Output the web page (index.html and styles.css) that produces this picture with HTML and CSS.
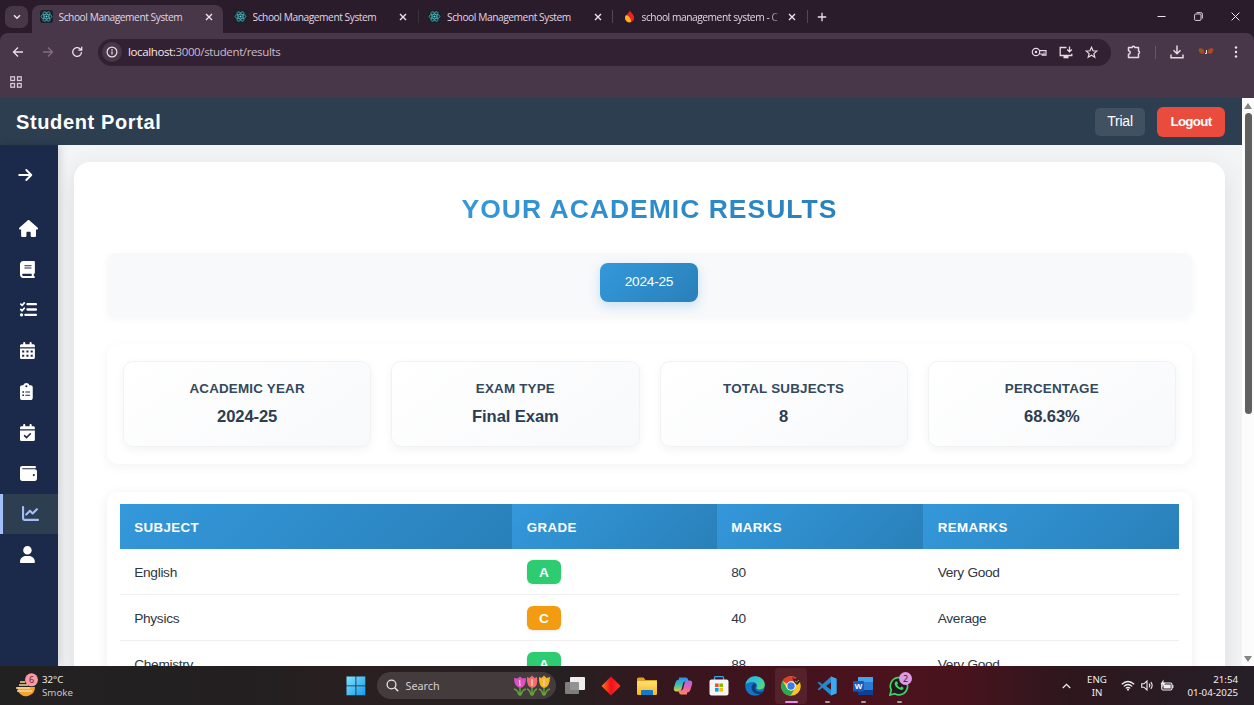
FILE: index.html
```html
<!DOCTYPE html>
<html lang="en">
<head>
<meta charset="utf-8">
<title>School Management System</title>
<link rel="stylesheet" href="styles.css">
</head>
<body>
<svg class="defs" width="0" height="0">
  <defs>
    <symbol id="react" viewBox="0 0 14 14"><rect width="14" height="14" rx="3" fill="#1b2029"/><g fill="none" stroke="#4fb9c4" stroke-width=".8"><ellipse cx="7" cy="7" rx="5.8" ry="2.3"/><ellipse cx="7" cy="7" rx="5.8" ry="2.3" transform="rotate(60 7 7)"/><ellipse cx="7" cy="7" rx="5.8" ry="2.3" transform="rotate(120 7 7)"/></g><circle cx="7" cy="7" r="1.1" fill="#6fdce4"/></symbol>
    <symbol id="close" viewBox="0 0 8 8"><path d="M1 1l6 6M7 1L1 7" stroke="#eee3ec" stroke-width="1.4" fill="none"/></symbol>
    <linearGradient id="winblue" x1="0" y1="0" x2="1" y2="1"><stop offset="0" stop-color="#7fe3ff"/><stop offset="1" stop-color="#159bea"/></linearGradient>
    <linearGradient id="yellow" x1="0" y1="0" x2="0" y2="1"><stop offset="0" stop-color="#ffe07a"/><stop offset="1" stop-color="#f6b71d"/></linearGradient>
    <linearGradient id="edge" x1="0" y1="0" x2="1" y2="1"><stop offset="0" stop-color="#29b0e8"/><stop offset=".5" stop-color="#35c8c0"/><stop offset="1" stop-color="#66dd55"/></linearGradient>
    <linearGradient id="diamond" x1="0" y1="0" x2="1" y2="0"><stop offset="0" stop-color="#ff7a1a"/><stop offset=".5" stop-color="#f0101c"/><stop offset="1" stop-color="#ff3a2a"/></linearGradient>
    <linearGradient id="copA" x1="0" y1="0" x2="0" y2="1"><stop offset="0" stop-color="#2b8cf0"/><stop offset=".5" stop-color="#35c1b0"/><stop offset="1" stop-color="#e6c83a"/></linearGradient>
    <linearGradient id="copB" x1="0" y1="0" x2="0" y2="1"><stop offset="0" stop-color="#a06af0"/><stop offset=".5" stop-color="#e862b0"/><stop offset="1" stop-color="#ff8a5a"/></linearGradient>
  </defs>
</svg>

<header class="tabstrip">
  <div class="tabsearch"><svg width="8" height="6" viewBox="0 0 8 6"><path d="M1 1.2l3 3 3-3" fill="none" stroke="#eee3ec" stroke-width="1.5"/></svg></div>
  <div class="tab active"><svg class="fav"><use href="#react"/></svg><span>School Management System</span><svg class="x"><use href="#close"/></svg></div>
  <div class="tab"><svg class="fav"><use href="#react"/></svg><span>School Management System</span><svg class="x"><use href="#close"/></svg></div>
  <div class="tab"><svg class="fav"><use href="#react"/></svg><span>School Management System</span><svg class="x"><use href="#close"/></svg></div>
  <div class="tab"><svg class="fav" viewBox="0 0 14 14"><path d="M7.500 .5c1 2.500 4.500 4.500 4.500 8a4.900 4.900 0 0 1-9.800 0C2.200 6 5 5 7.500.5z" fill="#e8261c"/><path d="M3.200 5.500c3 1 5.500 3 5.300 7.500A4.800 4.800 0 0 1 2.200 8.500c0-1 .4-2 1-3z" fill="#ffb52b"/></svg><span class="fade">school management system - C</span><svg class="x"><use href="#close"/></svg></div>
  <svg class="plus" width="10" height="10" viewBox="0 0 10 10"><path d="M5 .8v8.400M.8 5h8.400" stroke="#eee3ec" stroke-width="1.300"/></svg>
  <div class="winctl">
    <svg width="9" height="9" viewBox="0 0 9 9"><path d="M.5 4.500h8" stroke="#eee3ec"/></svg>
    <svg width="9" height="9" viewBox="0 0 9 9"><g fill="none" stroke="#eee3ec" stroke-width=".9"><rect x=".6" y="2" width="6.400" height="6.400" rx="1"/><path d="M2.500.6h4.300q1.600 0 1.600 1.600v4.300"/></g></svg>
    <svg width="9" height="9" viewBox="0 0 9 9"><path d="M.6.6l7.800 7.800M8.400.6L.6 8.400" stroke="#eee3ec"/></svg>
  </div>
</header>

<div class="toolbar">
  <svg class="nav" viewBox="0 0 12 12"><path d="M11 6H1.500M6 1.500L1.500 6 6 10.500" /></svg>
  <svg class="nav dim" viewBox="0 0 12 12"><path d="M1 6h9.500M6 1.500L10.500 6 6 10.500"/></svg>
  <svg class="nav" viewBox="0 0 12 12"><path d="M10.500 6A4.400 4.400 0 1 1 9 2.700L10.500 4M10.700.8v3.400H7.300"/></svg>
  <div class="omnibox">
    <div class="info"><svg width="12" height="12" viewBox="0 0 12 12"><circle cx="6" cy="6" r="4.900" fill="none" stroke="#eadfe8" stroke-width="1.200"/><path d="M6 5.300v3.300M6 3.100v1.300" stroke="#eadfe8" stroke-width="1.200"/></svg></div>
    <span class="url"><b>localhost:</b>3000/student/results</span>
    <div class="omni-icons">
      <svg width="16" height="10" viewBox="0 0 16 10"><g fill="none" stroke="#e6d9e4" stroke-width="1.200"><circle cx="5" cy="5" r="3.700"/><path d="M8.500 3.600h6.500v4.600h-3.800V7H8.500M13 5.500v2.500"/></g><circle cx="5" cy="5" r="1.300" fill="#e6d9e4"/></svg>
      <svg width="14" height="13" viewBox="0 0 14 13"><path d="M7.500 1.500H1.200v8h11.600V7.800M10.500.5v5M8.200 3.500l2.300 2.300 2.300-2.300" fill="none" stroke="#e6d9e4" stroke-width="1.300"/><path d="M4.500 10h5v2.300h-5z" fill="#e6d9e4"/></svg>
      <svg width="13" height="13" viewBox="0 0 13 13"><path d="M6.500 1.300l1.500 3.500 3.800.3-2.900 2.500.9 3.700-3.300-2-3.300 2 .9-3.700L1.200 5.100 5 4.800z" fill="none" stroke="#e6d9e4" stroke-width="1.200"/></svg>
    </div>
  </div>
  <svg class="ext" width="14" height="14" viewBox="0 0 14 14"><path d="M1.500 2.500h3.700a1.300 1.300 0 0 1 2.600 0h3.700V6a1.400 1.400 0 0 1 0 2.700v3.800h-10V9.300c2.300-.4 2.300-3.200 0-3.600z" fill="none" stroke="#e6d9e4" stroke-width="1.500" stroke-linejoin="round"/></svg>
  <i class="sep"></i>
  <svg class="dl" width="14" height="14" viewBox="0 0 14 14"><path d="M7 .5v8M3.500 5.300L7 8.800l3.500-3.500M1 9.500v3.300h12V9.500" fill="none" stroke="#e6d9e4" stroke-width="1.500"/></svg>
  <svg class="avatar" width="16" height="8" viewBox="0 0 16 8"><path d="M.5 1q2.500-1.500 5 .5l.8 3.500-2 .8Q1 5.500.5 1zM15.500 1q-2.500-1.500-5 .5l-.8 3.500 2 .8q3.300-.3 3.800-4.800z" fill="#c0441a"/><path d="M2 2l2.500 2M14 2l-2.500 2" stroke="#3a7a35"/><path d="M8.500 2v3.500H7" stroke="#f1e6e0" fill="none"/></svg>
  <svg width="4" height="14" viewBox="0 0 4 14" fill="#eee3ec"><circle cx="2" cy="2.500" r="1.200"/><circle cx="2" cy="7" r="1.200"/><circle cx="2" cy="11.500" r="1.200"/></svg>
</div>
<div class="bookmarks"><svg width="12" height="12" viewBox="0 0 12 12" fill="none" stroke="#d8c8d5" stroke-width="1.300"><rect x=".8" y=".8" width="3.700" height="3.700"/><rect x="7.500" y=".8" width="3.700" height="3.700"/><rect x=".8" y="7.500" width="3.700" height="3.700"/><rect x="7.500" y="7.500" width="3.700" height="3.700"/></svg></div>

<div class="viewport">
  <div class="app">
    <div class="topbar"><h1>Student Portal</h1><span class="trial">Trial</span><span class="logout">Logout</span></div>
    <div class="body">
      <nav class="side">
        <div class="toggle"><svg width="15" height="14" viewBox="0 0 15 14"><path d="M1.200 7h12M8.300 2l5 5-5 5" fill="none" stroke="#fff" stroke-width="1.900" stroke-linecap="round" stroke-linejoin="round"/></svg></div>
        <a class="item"><svg viewBox="0 0 576 512"><path d="M575.8 255.500c0 18-15 32.100-32 32.100h-32l.7 160.200V472c0 22.100-17.900 40-40 40H392c-22.100 0-40-17.900-40-40v-88c0-17.700-14.300-32-32-32h-64c-17.700 0-32 14.300-32 32v88c0 22.100-17.900 40-40 40h-80c-22.100 0-40-17.900-40-40V287.600H32c-18 0-32-14-32-32.100 0-9 3-17 10-24L266.400 8c7-7 15-8 22-8s15 2 21 7l255.400 224.500c8 7 12 15 11 24z"/></svg></a>
        <a class="item"><svg viewBox="0 0 448 512"><path d="M96 0C43 0 0 43 0 96V416c0 53 43 96 96 96H384h32c17.700 0 32-14.300 32-32s-14.300-32-32-32V384c17.700 0 32-14.300 32-32V32c0-17.700-14.300-32-32-32H384 96zm0 384H352v64H96c-17.700 0-32-14.300-32-32s14.300-32 32-32zm32-240c0-8.800 7.200-16 16-16H336c8.800 0 16 7.200 16 16s-7.200 16-16 16H144c-8.800 0-16-7.200-16-16zm16 48H336c8.800 0 16 7.200 16 16s-7.200 16-16 16H144c-8.800 0-16-7.200-16-16s7.200-16 16-16z"/></svg></a>
        <a class="item"><svg viewBox="0 0 512 512"><g fill="none" stroke="#fff" stroke-linecap="round" stroke-linejoin="round"><path d="M224 96h256M224 256h256M160 416h320" stroke-width="68"/><path d="M24 96l40 38 64-76M24 256l40 38 64-76" stroke-width="52"/></g><circle cx="48" cy="416" r="50"/></svg></a>
        <a class="item"><svg viewBox="0 0 448 512"><path d="M128 0c17.700 0 32 14.300 32 32V64H288V32c0-17.700 14.300-32 32-32s32 14.300 32 32V64h48c26.500 0 48 21.500 48 48v48H0V112C0 85.500 21.500 64 48 64H96V32c0-17.700 14.300-32 32-32zM0 192H448V464c0 26.500-21.500 48-48 48H48c-26.500 0-48-21.500-48-48z"/><path class="cut" d="M64 256h64v60H64zM192 256h64v60h-64zM320 256h64v60h-64zM64 384h64v60H64zM192 384h64v60h-64zM320 384h64v60h-64z"/></svg></a>
        <a class="item"><svg viewBox="0 0 384 512"><path d="M192 0c-41.800 0-77.400 26.700-90.500 64H64C28.700 64 0 92.700 0 128v320c0 35.300 28.700 64 64 64h256c35.300 0 64-28.700 64-64V128c0-35.300-28.700-64-64-64h-37.500C269.400 26.700 233.800 0 192 0z"/><path class="cut" d="M192 64a32 32 0 1 1 0 64 32 32 0 1 1 0-64zM72 248h48v48H72zM160 256h144v32H160zM72 344h48v48H72zM160 352h144v32H160z"/></svg></a>
        <a class="item"><svg viewBox="0 0 448 512"><path d="M128 0c17.700 0 32 14.300 32 32V64H288V32c0-17.700 14.300-32 32-32s32 14.300 32 32V64h48c26.500 0 48 21.500 48 48v48H0V112C0 85.500 21.500 64 48 64H96V32c0-17.700 14.300-32 32-32zM0 192H448V464c0 26.500-21.500 48-48 48H48c-26.500 0-48-21.500-48-48z"/><path d="M136 352l60 58 116-116" fill="none" stroke="#1b2a4a" stroke-width="48" stroke-linecap="round"/></svg></a>
        <a class="item"><svg viewBox="0 0 512 512"><path fill-rule="evenodd" d="M64 32C28.700 32 0 60.700 0 96V416c0 35.300 28.700 64 64 64H448c35.300 0 64-28.700 64-64V192c0-35.300-28.700-64-64-64H80c-8.800 0-16-7.200-16-16s7.200-16 16-16H448c17.700 0 32-14.300 32-32s-14.300-32-32-32H64zM416 272a32 32 0 1 1 0 64 32 32 0 1 1 0-64z"/></svg></a>
        <a class="item on"><svg viewBox="0 0 512 512"><path d="M64 64c0-17.700-14.300-32-32-32S0 46.300 0 64V400c0 44.200 35.800 80 80 80H480c17.700 0 32-14.300 32-32s-14.300-32-32-32H80c-8.800 0-16-7.200-16-16V64zm406.600 86.600c12.500-12.500 12.500-32.800 0-45.300s-32.800-12.500-45.300 0L320 210.700l-57.400-57.400c-12.500-12.500-32.800-12.500-45.300 0l-112 112c-12.500 12.500-12.500 32.800 0 45.300s32.800 12.500 45.300 0L240 221.300l57.400 57.400c12.500 12.500 32.800 12.500 45.300 0l128-128z"/></svg></a>
        <a class="item"><svg viewBox="0 0 448 512"><path d="M224 256A128 128 0 1 0 224 0a128 128 0 1 0 0 256zm-45.700 48C79.800 304 0 383.800 0 482.300C0 498.700 13.300 512 29.700 512H418.300c16.400 0 29.700-13.300 29.700-29.700C448 383.800 368.200 304 269.700 304H178.300z"/></svg></a>
      </nav>
      <main class="main">
        <section class="sheet">
          <h2><span>YOUR ACADEMIC RESULTS</span></h2>
          <div class="years"><span class="year">2024-25</span></div>
          <div class="stats">
            <div class="stat"><h3>ACADEMIC YEAR</h3><p>2024-25</p></div>
            <div class="stat"><h3>EXAM TYPE</h3><p>Final Exam</p></div>
            <div class="stat"><h3>TOTAL SUBJECTS</h3><p>8</p></div>
            <div class="stat"><h3>PERCENTAGE</h3><p>68.63%</p></div>
          </div>
          <div class="results">
            <div class="row head"><span>SUBJECT</span><span>GRADE</span><span>MARKS</span><span>REMARKS</span></div>
            <div class="row"><span>English</span><span><b class="grade">A</b></span><span>80</span><span>Very Good</span></div>
            <div class="row"><span>Physics</span><span><b class="grade c">C</b></span><span>40</span><span>Average</span></div>
            <div class="row"><span>Chemistry</span><span><b class="grade">A</b></span><span>88</span><span>Very Good</span></div>
          </div>
        </section>
      </main>
    </div>
  </div>
  <div class="scroll"><i class="up"></i><i class="thumb"></i><i class="down"></i></div>
</div>

<footer class="taskbar">
  <div class="weather">
    <svg width="24" height="26" viewBox="0 0 24 26"><path d="M2 14h18a9 9 0 0 1-16.500 5z" fill="#f5a32c"/><path d="M5 9h5M4 12h9M1 15h14M2 18h15" stroke="#f7d79a" stroke-width="1.500"/><circle cx="16.500" cy="6.800" r="6.500" fill="#f79aa8"/><text x="16.500" y="10.300" text-anchor="middle" class="badge6">6</text></svg>
    <div><p>32°C</p><p class="soft">Smoke</p></div>
  </div>
  <svg class="start" width="20" height="20" viewBox="0 0 20 20" fill="url(#winblue)"><path d="M.5.5h9v9h-9zM10.300.5h9v9h-9zM.5 10.300h9v9h-9zM10.300 10.300h9v9h-9z"/></svg>
  <div class="search">
    <svg width="13" height="13" viewBox="0 0 13 13"><circle cx="5.500" cy="5.500" r="4.400" fill="none" stroke="#e8e4e5" stroke-width="1.300"/><path d="M8.700 8.700l3.500 3.500" stroke="#e8e4e5" stroke-width="1.500"/></svg>
    <span>Search</span>
    <svg class="tulips" width="40" height="22" viewBox="0 0 40 22"><path d="M8 9v12M7 20q-1-5-5-6M9 20q1-5 5-6M20 9v12M19 20q-1-5-4-6M21 20q1-5 4-6M32 9v12M31 20q-1-5-4-6M33 20q1-5 5-6" stroke="#5fa03a" stroke-width="1.500" fill="none"/><path d="M2 3l3.500.5L8 1.500l2.500 2L14 3q0 9-5.500 10Q2 12 2 3z" fill="#df4fc0"/><path d="M15 2l2.500 1L20 .5 22.500 3 25 2q1.500 10-4.500 11Q14 12 15 2z" fill="#ef6e72"/><path d="M27 2l2.500 1L32 .5 34.500 3l3.500-1q0 10-6 11-5.500-1-5-11z" fill="#f5b62e"/><path d="M7.500 5l.5 6M20 4v7M32 4v7" stroke="#ffd0bd" stroke-width="1.300"/></svg>
  </div>
  <div class="apps">
    <div><svg viewBox="0 0 20 20"><rect x="5" y="1" width="15" height="13" rx="1" fill="#eee"/><rect x="0" y="6" width="14" height="12" rx="1" fill="#888" opacity=".9"/></svg></div>
    <div><svg viewBox="0 0 20 20"><path d="M10 .5l9.500 9.500-9.500 9.500L.5 10z" fill="url(#diamond)"/></svg></div>
    <div><svg viewBox="0 0 20 20"><path d="M0 3q0-1.500 1.500-1.500h5L8.500 4H20v5H0z" fill="#e3a21b"/><rect y="5" width="20" height="14" rx="1.200" fill="url(#yellow)"/><path d="M4 19v-4q0-1 1-1h10q1 0 1 1v4z" fill="#1678c8"/></svg></div>
    <div><svg viewBox="0 0 20 20"><path d="M6 1.500h7q1.500 0 2 2l.6 2H12q-1.500 0-2 2l-1.500 6q-.7 2-2.500 2H3.500q-3.500 0-2.500-4l1.500-5q1-3 3.500-3z" fill="url(#copA)"/><path d="M14 18.500H8q-1.500 0-2-2l-.5-2H8q1.500 0 2.200-2l1.500-6q.6-2 2.300-2h2.500q3.500 0 2.500 4l-1.500 5q-1 3-3.500 3z" fill="url(#copB)"/></svg></div>
    <div><svg viewBox="0 0 20 20"><path d="M5.500 5V1.700q0-1 1-1h7q1 0 1 1V5" fill="none" stroke="#38a4e6" stroke-width="1.300"/><rect x=".5" y="3.500" width="19" height="16" rx="2" fill="#f4f4f4"/><path d="M6 7.500h3.600v3.600H6z" fill="#f25022"/><path d="M10.400 7.500H14v3.600h-3.600z" fill="#7fba00"/><path d="M6 12h3.600v3.600H6z" fill="#00a4ef"/><path d="M10.400 12H14v3.600h-3.600z" fill="#ffb900"/></svg></div>
    <div><svg viewBox="0 0 20 20"><circle cx="10" cy="10" r="9.800" fill="#1574c4"/><path d="M.4 8.500C1.500 3.300 5.500.2 10 .2c6 0 9.800 4.300 9.800 8.300 0 3-2.300 5-5.500 5-2.300 0-3-1-2.500-2 1.500-3-1-5.500-4-5.500C4.500 6 1.500 7 .4 8.500z" fill="url(#edge)"/><path d="M7.500 8.500c-2.500 4 .5 10 7 9.800 2-.4 3.500-2 4.200-3.300-3 1.500-7.200 1-8.200-1.500C9.700 11.800 11 10 11 9 10.500 7.500 8.500 7 7.500 8.500z" fill="#103f78"/></svg></div>
    <div class="current"><svg viewBox="0 0 20 20"><circle cx="10" cy="10" r="9.800" fill="#f7c52b"/><path d="M10 10L1.500 5.100A9.800 9.800 0 0 1 18.500 5.200H10z" fill="#e33b2e"/><path d="M1.500 5.100A9.800 9.800 0 0 0 9.500 19.800L14 12.300 6 12.500z" fill="#2da94f"/><circle cx="10" cy="10" r="4.700" fill="#fff"/><circle cx="10" cy="10" r="3.700" fill="#3c7be8"/><path d="M11 1l2.500 2L16 2l2 1 2-2-1 5-3 3-3-3z" fill="#3b2523"/><path d="M14 5l1.500 1L18 4" stroke="#c58b6b" fill="none"/></svg><i class="run pink"></i></div>
    <div><svg viewBox="0 0 20 20"><path d="M14 .5L5.500 8.300 2 5.700.5 6.500 4 10 .5 13.500l1.500.8 3.500-2.600L14 19.500l5.500-2.300V2.800zM14.500 6v8L9 10z" fill="#2489ca" fill-rule="evenodd"/><path d="M14 .5l5.500 2.300v14.400L14 19.500z" fill="#3fa9f0"/></svg><i class="run"></i></div>
    <div><svg viewBox="0 0 20 20"><rect x="5" y="1" width="15" height="18" rx="1.300" fill="#2b7cd3"/><path d="M5 1h15v5H5z" fill="#41a5ee"/><path d="M5 14h15v5H5z" fill="#103f91"/><rect y="5" width="11" height="10.500" rx="1" fill="#185abd"/><text x="5.500" y="13.300" text-anchor="middle" class="wordw">W</text></svg><i class="run"></i></div>
    <div><svg viewBox="0 0 20 20"><path d="M1 19l1.300-4.800A8.600 8.600 0 1 1 5.700 17.700z" fill="#21191c" stroke="#3dd366" stroke-width="1.700"/><path d="M6.500 5.500l1.500-.3 1 2.300-.8 1.200q1 2 3 3l1.200-1.100 2.200 1.100-.3 1.600q-2 1.500-5-.5T5.700 8.500q-.2-1.800.8-3z" fill="#3dd366"/></svg><i class="run"></i><b class="count">2</b></div>
  </div>
  <svg class="chev" width="9" height="6" viewBox="0 0 9 6"><path d="M.8 5l3.700-3.700L8.200 5" fill="none" stroke="#eee" stroke-width="1.300"/></svg>
  <div class="lang">ENG<br>IN</div>
  <div class="tray">
    <svg width="14" height="11" viewBox="0 0 14 11"><g fill="none" stroke="#eee" stroke-width="1.200"><path d="M.8 4.300q6.200-5.600 12.400 0M2.800 6.400q4.200-3.800 8.400 0M4.700 8.400q2.300-2 4.600 0"/></g><circle cx="7" cy="9.600" r="1.100" fill="#eee"/></svg>
    <svg width="13" height="11" viewBox="0 0 13 11"><path d="M.7 3.800h2.200L6 1v9L2.900 7.200H.7zM8 3.700q1.500 1.800 0 3.600M9.800 2.200q2.700 3.300 0 6.600" fill="none" stroke="#eee" stroke-width="1.100"/></svg>
    <svg width="14" height="13" viewBox="0 0 14 13"><rect x="1.700" y="4" width="10.300" height="7" rx="1.500" fill="none" stroke="#eee" stroke-width="1.100"/><rect x="3.500" y="5.500" width="7.200" height="4" fill="#eee"/><path d="M12.800 6v3" stroke="#eee" stroke-width="1.200"/><path d="M3.500.5L.5 5.300h2L2 8.500 5.500 4h-2z" fill="#eee"/></svg>
  </div>
  <div class="clock">21:54<br>01-04-2025</div>
</footer>
</body>
</html>
```
FILE: styles.css
```css
* { box-sizing: border-box; }
html, body { margin: 0; height: 705px; overflow: hidden; }
body { width: 1254px; display: flex; flex-direction: column; background: #2a1c2b; font-family: "Liberation Sans", Arial, sans-serif; }
h1, h2, h3, p { margin: 0; }
svg { display: block; flex: none; }
.defs { position: absolute; }

/* Browser frame */
.tabstrip { height: 33px; flex: none; display: flex; align-items: center; background: #2a1c2b; font: 10.2px/16px "Open Sans", sans-serif; letter-spacing: -.43px; color: #e2d6e0; }
.tabsearch { width: 23px; height: 22px; margin: 0 4px 0 5px; border-radius: 7px; background: #483748; display: grid; place-items: center; }
.tab { width: 194.5px; height: 33px; padding: 0 10.5px; display: flex; align-items: center; position: relative; }
.tab.active { width: 191px; height: 28px; margin-top: 5px; padding: 0 10px 5px 7.500px; border-radius: 8px 8px 0 0; background: #483748; }
.tab span { margin-left: 6px; flex: 1; white-space: nowrap; overflow: hidden; }
.tab.active + .tab::after, .tab + .tab + .tab::after { content: ""; position: absolute; right: -1px; top: 10px; width: 1px; height: 13px; background: #574656; }
.tab.active + .tab::after { background: #3d2e3d; }
.tab .fade { -webkit-mask-image: linear-gradient(90deg, #000 92%, transparent 102%); mask-image: linear-gradient(90deg, #000 92%, transparent 102%); margin-right: 8px; }
.fav { width: 13px; height: 13px; }
.x { width: 8px; height: 8px; }
.plus { margin-left: 10px; }
.winctl { margin-left: auto; margin-right: 14.500px; display: flex; gap: 28px; }
.toolbar { height: 38px; flex: none; display: flex; align-items: center; padding-left: 12px; background: #483748; border-radius: 8px 8px 0 0; }
.nav { width: 12px; height: 12px; margin-right: 17.500px; fill: none; stroke: #eadfe8; stroke-width: 1.300; }
.nav.dim { stroke: #826f80; }
.omnibox { width: 1013px; height: 27px; margin-left: -2.500px; padding: 0 13px 0 4px; display: flex; align-items: center; border-radius: 14px; background: #322132; }
.info { width: 20px; height: 20px; border-radius: 50%; background: #483748; display: grid; place-items: center; }
.url { margin-left: 6px; font: 11.500px/16px "Open Sans", sans-serif; letter-spacing: -.37px; color: #cbbcc9; }
.url b { font-weight: 400; color: #f3eaf1; }
.omni-icons { margin-left: auto; display: flex; align-items: center; gap: 12px; }
.ext { margin-left: 15.500px; }
.sep { width: 1px; height: 13px; margin: 0 14px; background: #6a5668; }
.avatar { margin: 0 20px 0 14px; }
.bookmarks { height: 27px; flex: none; padding: 5px 10px; background: #483748; }

/* Application */
.viewport { height: 568px; flex: none; display: flex; overflow: hidden; }
.app { width: 1242px; display: flex; flex-direction: column; }
.topbar { height: 47px; flex: none; padding: 0 17px 0 16px; display: flex; align-items: center; background: #2c3e50; color: #fff; }
.topbar h1 { font-size: 20px; line-height: 24px; letter-spacing: .62px; }
.trial { margin-left: auto; width: 50px; height: 28px; border-radius: 5px; background: #415162; font-size: 14px; letter-spacing: -.2px; line-height: 27px; text-align: center; }
.logout { margin-left: 12px; width: 68px; height: 30px; border-radius: 6px; background: #e94b3c; font-size: 13.300px; letter-spacing: -.65px; font-weight: 700; line-height: 29px; text-align: center; }
.body { height: 521px; display: flex; }
.side { width: 57.500px; flex: none; padding-top: 12px; background: #1b2a4a; position: relative; z-index: 1; box-shadow: 2px 0 8px rgba(0,0,0,.14); }
.toggle { height: 51px; padding: 11px 0 0 18px; }
.item { height: 40.800px; padding-left: 19.800px; display: flex; align-items: center; }
.item:nth-child(2) { padding-left: 19px; }
.item svg { height: 17px; fill: #fff; }
.item .cut { fill: #1b2a4a; }
.item.on { padding-left: 18.500px; border-left: 3.300px solid #a3bffa; background: #2c3e50; }
.item.on svg { fill: #a3bffa; }
.main { flex: 1; padding: 17px 17px 0 16.500px; background: #f3f4f6; }
.sheet { height: 900px; padding: 30px 33px; border-radius: 16px; background: #fff; box-shadow: 0 8px 26px rgba(0,0,0,.1); }
.sheet h2 { height: 61px; text-align: center; font-size: 26.500px; line-height: 34px; letter-spacing: 1px; }
.sheet h2 span { background: linear-gradient(135deg, #3498db, #2980b9); -webkit-background-clip: text; background-clip: text; color: transparent; }
.years { height: 64px; padding-top: 10px; border-radius: 8px; background: #f8f9fb; box-shadow: 0 2px 8px rgba(0,0,0,.04); display: flex; justify-content: center; align-items: flex-start; }
.year { width: 98px; height: 38.500px; margin-right: 1px; border-radius: 8px; background: linear-gradient(135deg, #3498db, #2980b9); box-shadow: 0 4px 12px rgba(52,152,219,.25); color: #fff; font-size: 13.700px; letter-spacing: -.25px; line-height: 37px; text-align: center; }
.stats { height: 120px; margin-top: 27px; padding: 16.500px 16px; display: grid; grid-template-columns: repeat(4, 1fr); gap: 20px; border-radius: 12px; box-shadow: 0 3px 12px rgba(0,0,0,.05); }
.stat { height: 86px; padding-top: 18px; text-align: center; color: #34495e; border: 1px solid #f1f2f4; border-radius: 10px; background: linear-gradient(145deg, #fff, #f8f9fb); box-shadow: 0 3px 10px rgba(0,0,0,.05); }
.stat h3 { font-size: 13.400px; line-height: 18px; letter-spacing: .2px; }
.stat p { margin-top: 9px; font-size: 16.600px; font-weight: 700; line-height: 20px; letter-spacing: -.1px; color: #2c3e50; }
.results { height: 500px; margin-top: 27.500px; padding: 12.500px 13px 12.500px 12.500px; border-radius: 10px; box-shadow: 0 2px 12px rgba(0,0,0,.07); }
.row { height: 46px; display: grid; grid-template-columns: 392.500px 204.500px 206.500px 1fr; border-bottom: 1.500px solid #edeff1; color: #2f3542; font-size: 13.700px; letter-spacing: -.3px; }
.row > span { padding: 1px 0 0 14.700px; display: flex; align-items: center; }
.row.head { height: 45px; border: 0; color: #fff; font-size: 13.300px; font-weight: 700; letter-spacing: .4px; }
.head > span { background: linear-gradient(135deg, #3498db, #2980b9); }
.grade { width: 34px; height: 24px; border-radius: 6px; background: #2ecc71; color: #fff; text-align: center; line-height: 25px; box-shadow: 0 1px 3px rgba(0,0,0,.1); }
.grade.c { background: #f39c12; }
.scroll { width: 12px; display: flex; flex-direction: column; align-items: center; background: #fcfcfc; }
.up, .down { border: 4px solid transparent; border-top: 0; border-bottom: 6px solid #858585; margin-top: 5px; }
.thumb { width: 7px; height: 301px; margin-top: 4px; border-radius: 4px; background: #606060; }
.down { margin-top: auto; margin-bottom: 4px; transform: rotate(180deg); }

/* Taskbar */
.taskbar { height: 39px; flex: none; display: flex; align-items: center; color: #f2eef0; font: 9.700px/13px "Noto Sans", sans-serif; background: linear-gradient(90deg, #222121 0, #231f20 250px, #2a1f21 360px, #252021 560px, #39151d 690px, #4b121d 870px, #48131d 960px, #2d171d 1070px, #261f28 1254px); }
.weather { width: 345.500px; padding-left: 15px; display: flex; gap: 3px; }
.weather .soft { color: #c9c5c6; }
.badge6 { font-size: 9px; fill: #702030; }
.search { width: 179px; height: 27px; margin-left: 11px; padding: 0 4px 0 9px; display: flex; align-items: center; border-radius: 14px; background: #443b3d; font-size: 10.800px; color: #d6cfd1; }
.search span { margin-left: 7px; }
.tulips { margin-left: auto; }
.apps { display: grid; grid-template-columns: repeat(10, 36px); margin-left: 1.500px; }
.apps > div { height: 36px; display: grid; place-items: center; position: relative; }
.apps svg { width: 20px; height: 20px; }
.apps .current { width: 32px; margin-left: 2px; border-radius: 4px; background: #55222c; }
.run { position: absolute; bottom: 1px; width: 5px; height: 2px; border-radius: 1px; background: #a99da1; }
.run.pink { width: 13px; background: #e28fe8; }
.wordw { font: 700 8px "Liberation Sans", sans-serif; fill: #fff; }
.count { position: absolute; left: 18px; top: 4px; width: 13px; height: 13px; border-radius: 50%; background: #dd9be3; color: #3c1642; font-size: 9px; font-weight: 400; line-height: 13px; text-align: center; }
.chev { margin-left: 145px; }
.lang { width: 30px; margin-left: 11px; text-align: center; }
.tray { margin-left: 9px; display: flex; align-items: center; gap: 6px; }
.clock { margin-left: auto; margin-right: 16px; text-align: right; }
```
